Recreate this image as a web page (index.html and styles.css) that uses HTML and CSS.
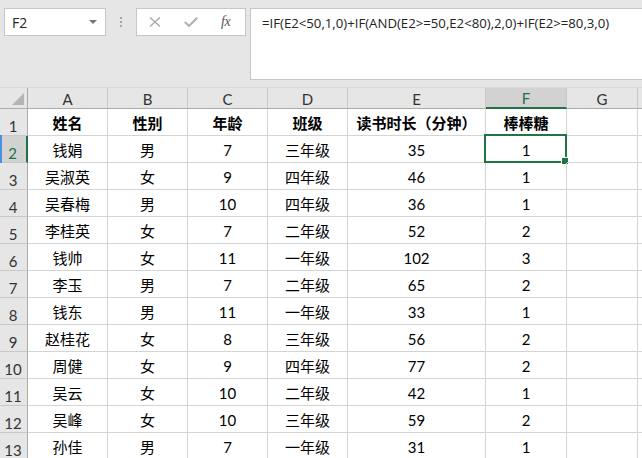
FILE: index.html
```html
<!DOCTYPE html>
<html lang="zh">
<head>
<meta charset="utf-8">
<link rel="stylesheet" href="styles.css">
</head>
<body>
<div class="app">
  <div class="toolbar">
    <div class="namebox"><span class="name">F2</span><span class="caret"></span></div>
    <div class="dots"><i></i><i></i><i></i></div>
    <div class="fxbox">
      <svg class="ic-x" width="12" height="10" viewBox="0 0 12 10"><path d="M1 0.5 L11 9.5 M11 0.5 L1 9.5" stroke="#a9a9a9" stroke-width="1.4" fill="none"/></svg>
      <svg class="ic-ok" width="14" height="10" viewBox="0 0 14 10"><path d="M0.8 5 L5 9 L13.2 0.8" stroke="#b0b0b0" stroke-width="2" fill="none"/></svg>
      <span class="fx">fx</span>
    </div>
    <div class="formula">=IF(E2&lt;50,1,0)+IF(AND(E2&gt;=50,E2&lt;80),2,0)+IF(E2&gt;=80,3,0)</div>
  </div>
  <div class="sheet">
    <div class="corner"><span class="tri"></span></div>
    <div class="ch">A</div><div class="ch">B</div><div class="ch">C</div><div class="ch">D</div><div class="ch">E</div><div class="ch sel">F</div><div class="ch">G</div><div class="ch rest"></div>

    <div class="rh">1</div><div class="c b">姓名</div><div class="c b">性别</div><div class="c b">年龄</div><div class="c b">班级</div><div class="c b">读书时长（分钟）</div><div class="c b">棒棒糖</div><div class="c"></div><div class="c rest"></div>

    <div class="rh sel"><span class="mark"></span>2</div><div class="c">钱娟</div><div class="c">男</div><div class="c n">7</div><div class="c">三年级</div><div class="c n">35</div><div class="c n active">1<span class="selbox"><span class="handle"></span></span></div><div class="c"></div><div class="c rest"></div>

    <div class="rh">3</div><div class="c">吴淑英</div><div class="c">女</div><div class="c n">9</div><div class="c">四年级</div><div class="c n">46</div><div class="c n">1</div><div class="c"></div><div class="c rest"></div>
    <div class="rh">4</div><div class="c">吴春梅</div><div class="c">男</div><div class="c n">10</div><div class="c">四年级</div><div class="c n">36</div><div class="c n">1</div><div class="c"></div><div class="c rest"></div>
    <div class="rh">5</div><div class="c">李桂英</div><div class="c">女</div><div class="c n">7</div><div class="c">二年级</div><div class="c n">52</div><div class="c n">2</div><div class="c"></div><div class="c rest"></div>
    <div class="rh">6</div><div class="c">钱帅</div><div class="c">女</div><div class="c n">11</div><div class="c">一年级</div><div class="c n">102</div><div class="c n">3</div><div class="c"></div><div class="c rest"></div>
    <div class="rh">7</div><div class="c">李玉</div><div class="c">男</div><div class="c n">7</div><div class="c">二年级</div><div class="c n">65</div><div class="c n">2</div><div class="c"></div><div class="c rest"></div>
    <div class="rh">8</div><div class="c">钱东</div><div class="c">男</div><div class="c n">11</div><div class="c">一年级</div><div class="c n">33</div><div class="c n">1</div><div class="c"></div><div class="c rest"></div>
    <div class="rh">9</div><div class="c">赵桂花</div><div class="c">女</div><div class="c n">8</div><div class="c">三年级</div><div class="c n">56</div><div class="c n">2</div><div class="c"></div><div class="c rest"></div>
    <div class="rh">10</div><div class="c">周健</div><div class="c">女</div><div class="c n">9</div><div class="c">四年级</div><div class="c n">77</div><div class="c n">2</div><div class="c"></div><div class="c rest"></div>
    <div class="rh">11</div><div class="c">吴云</div><div class="c">女</div><div class="c n">10</div><div class="c">二年级</div><div class="c n">42</div><div class="c n">1</div><div class="c"></div><div class="c rest"></div>
    <div class="rh">12</div><div class="c">吴峰</div><div class="c">女</div><div class="c n">10</div><div class="c">三年级</div><div class="c n">59</div><div class="c n">2</div><div class="c"></div><div class="c rest"></div>
    <div class="rh">13</div><div class="c">孙佳</div><div class="c">男</div><div class="c n">7</div><div class="c">一年级</div><div class="c n">31</div><div class="c n">1</div><div class="c"></div><div class="c rest"></div>
  </div>
</div>
</body>
</html>
```
FILE: styles.css
```css
* { box-sizing: border-box; }
html, body { margin: 0; padding: 0; }
body {
  width: 642px;
  height: 458px;
  overflow: hidden;
  background: #ffffff;
  font-family: "Noto Sans CJK SC", "Noto Sans", sans-serif;
}
.app { width: 642px; height: 458px; overflow: hidden; }

.toolbar {
  height: 88px;
  background: #e6e6e6;
  display: flex;
  align-items: flex-start;
  padding: 8px 0 0 4px;
}
.namebox {
  width: 102px;
  height: 28px;
  background: #fff;
  border: 1px solid #c6c6c6;
  display: flex;
  align-items: center;
  justify-content: space-between;
  padding: 0 8px 0 7px;
}
.name {
  font-family: "Open Sans", "Liberation Sans", sans-serif;
  font-size: 14px;
  color: #222;
}
.caret {
  width: 0; height: 0;
  border-left: 4px solid transparent;
  border-right: 4px solid transparent;
  border-top: 4px solid #777;
}
.dots {
  width: 30px;
  height: 28px;
  display: flex;
  flex-direction: column;
  align-items: center;
  justify-content: center;
  gap: 2px;
}
.dots i { display: block; width: 2px; height: 2px; background: #a6a6a6; }
.fxbox {
  width: 110px;
  height: 28px;
  background: #fff;
  border: 1px solid #c6c6c6;
  display: flex;
  align-items: center;
  padding: 0 0 0 12px;
}
.ic-x { margin-right: 23px; }
.ic-ok { margin-right: 23px; }
.fx {
  font-family: "Liberation Serif", "DejaVu Serif", serif;
  font-style: italic;
  font-size: 14px;
  color: #555;
  letter-spacing: -0.5px;
}
.formula {
  margin-left: 4px;
  flex: 1;
  height: 72px;
  background: #fff;
  border: 1px solid #c6c6c6;
  border-right: none;
  padding: 5px 0 0 11px;
  font-family: "Open Sans", "Liberation Sans", sans-serif;
  font-size: 13.2px;
  color: #222;
  white-space: nowrap;
}

.sheet {
  display: grid;
  grid-template-columns: 28px 80px 80px 80px 80px 138px 81px 71px 1fr;
  grid-template-rows: 21px repeat(13, 27px);
  border-top: 1px solid #dadada;
  margin-top: -1px;
}
.corner {
  position: relative;
  background: #e6e6e6;
  border-right: 1px solid #ababab;
  border-bottom: 1px solid #ababab;
}
.tri {
  position: absolute;
  right: 3px;
  bottom: 3px;
  width: 0; height: 0;
  border-left: 12px solid transparent;
  border-bottom: 12px solid #b4b4b4;
}
.ch {
  background: #e6e6e6;
  border-right: 1px solid #c8c8c8;
  border-bottom: 1px solid #ababab;
  display: flex;
  align-items: flex-end;
  justify-content: center;
  font-family: "Lato", "Open Sans", sans-serif;
  font-size: 15px;
  line-height: 18px;
  color: #333;
}
.ch.sel {
  background: #d2d2d2;
  color: #217346;
  border-bottom: 2px solid #217346;
}
.ch.rest { border-right: none; }
.rh {
  position: relative;
  background: #e6e6e6;
  border-right: 1px solid #ababab;
  border-bottom: 1px solid #c8c8c8;
  display: flex;
  align-items: flex-end;
  justify-content: center;
  font-family: "Lato", "Open Sans", sans-serif;
  font-size: 15px;
  line-height: 17px;
  color: #333;
  padding-right: 1px;
}
.rh.sel {
  background: #d2d2d2;
  color: #217346;
  border-right: 2px solid #217346;
}
.mark {
  position: absolute;
  left: 0; top: -1px; bottom: -1px;
  width: 2px;
  background: #4a90e2;
}
.c {
  position: relative;
  border-right: 1px solid #d4d4d4;
  border-bottom: 1px solid #d4d4d4;
  display: flex;
  align-items: center;
  justify-content: center;
  font-size: 15px;
  color: #000;
  padding-top: 1px;
  white-space: nowrap;
}
.c.b { font-weight: bold; }
.c.n {
  font-family: "Lato", "Open Sans", sans-serif;
  font-size: 15px;
  padding-top: 2px;
}
.c.rest { border-right: none; }
.selbox {
  position: absolute;
  left: -2px; top: -2px; right: -1px; bottom: -1px;
  border: 2px solid #217346;
}
.handle {
  position: absolute;
  right: -3px; bottom: -3px;
  width: 6px; height: 6px;
  background: #217346;
  outline: 1px solid #fff;
}
```
